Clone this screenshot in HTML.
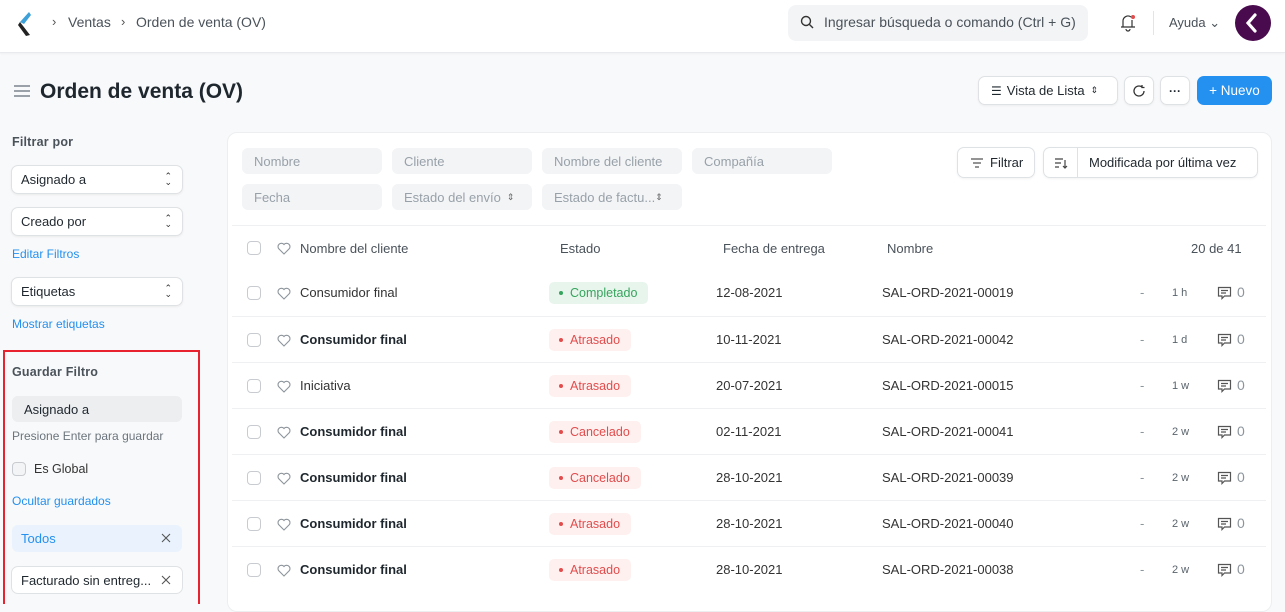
<!DOCTYPE html>
<html><head><meta charset="utf-8">
<style>
*{box-sizing:border-box;margin:0;padding:0}
body{width:1285px;height:604px;overflow:hidden;background:#f8f9fa;font-family:"Liberation Sans",sans-serif;font-size:13px;color:#1f272e;position:relative}
.a{position:absolute}
.nav{left:0;top:0;width:1285px;height:53px;background:#fff;border-bottom:1px solid #e8eaed;box-shadow:0 1px 2px rgba(0,0,0,.04)}
.btn{position:absolute;background:#fff;border:1px solid #dfe2e5;border-radius:7px;box-shadow:0 1px 2px rgba(0,0,0,.05);display:flex;align-items:center;color:#1f272e}
.sel{position:absolute;left:11px;width:172px;height:29px;background:#fff;border:1px solid #dfe2e5;border-radius:7px;box-shadow:0 1px 2px rgba(0,0,0,.06);padding-left:9px;display:flex;align-items:center;font-size:13px}
.car{position:absolute;right:10px;top:7px;font-size:9px;line-height:6px;color:#333;text-align:center}
.link{position:absolute;left:12px;color:#2490ef;font-size:12px}
.card{left:227px;top:132px;width:1045px;height:480px;background:#fff;border:1px solid #eceef0;border-radius:10px}
.fld{position:absolute;width:140px;height:26px;background:#f3f4f6;border-radius:6px;color:#98a1a9;padding-left:12px;display:flex;align-items:center;font-size:13px}
.row{position:absolute;left:232px;width:1034px;height:46px;border-top:1px solid #eef0f2}
.row>*{position:absolute}
.cb{left:15px;width:14px;height:14px;border:1px solid #c8ccd0;border-radius:4px;background:#fff}
.pill{height:22px;border-radius:5px;padding:0 11px 0 21px;display:flex;align-items:center;font-size:12.5px}
.pill:before{content:"";position:absolute;left:10px;top:9px;width:4px;height:4px;border-radius:50%;background:currentColor}
.g{background:#e8f5ec;color:#36a45d}
.r{background:#fff0f0;color:#e24c4c}
.x{position:absolute;right:11px;top:8px}
</style></head><body>
<div class="a nav">
  <svg class="a" style="left:16px;top:11px" width="18" height="26" viewBox="0 0 18 26"><path d="M13 1 L4 11 L8 13 L15 4Z" fill="#3ea0d8"/><path d="M4 11 L14 24 L10 25 L2 14Z" fill="#222"/></svg>
  <div class="a" style="left:52px;top:14px;color:#555">›</div>
  <div class="a" style="left:68px;top:14px;color:#4a525a;font-size:14px">Ventas</div>
  <div class="a" style="left:121px;top:14px;color:#555">›</div>
  <div class="a" style="left:136px;top:14px;color:#4a525a;font-size:14px">Orden de venta (OV)</div>
  <div class="a" style="left:788px;top:5px;width:300px;height:36px;background:#f3f4f6;border-radius:8px"></div>
  <svg class="a" style="left:800px;top:15px" width="14" height="14" viewBox="0 0 14 14"><circle cx="6" cy="6" r="4.5" fill="none" stroke="#333" stroke-width="1.4"/><path d="M9.5 9.5 L13 13" stroke="#333" stroke-width="1.4"/></svg>
  <div class="a" style="left:824px;top:14px;color:#4a525a;font-size:14px">Ingresar búsqueda o comando (Ctrl + G)</div>
  <svg class="a" style="left:1119px;top:13px" width="18" height="20" viewBox="0 0 18 20"><path d="M4 14 V8 a5 5 0 0 1 8 -4 M13 7 V14 M2 14 H16 M7 16 a2 2 0 0 0 4 0" fill="none" stroke="#333" stroke-width="1.2"/><circle cx="14" cy="4" r="2" fill="#e24c4c"/></svg>
  <div class="a" style="left:1153px;top:11px;width:1px;height:24px;background:#e2e4e6"></div>
  <div class="a" style="left:1169px;top:15px;color:#4a525a;font-size:13px">Ayuda ⌄</div>
  <div class="a" style="left:1235px;top:5px;width:36px;height:36px;border-radius:50%;background:#4a0a4e"></div>
  <svg class="a" style="left:1245px;top:13px" width="14" height="20" viewBox="0 0 14 20"><path d="M10 2 L3 10 L10 18" fill="none" stroke="#fff" stroke-width="3.2" stroke-linecap="round"/></svg>
</div>
<svg class="a" style="left:14px;top:84px" width="16" height="14" viewBox="0 0 16 14"><path d="M0 2H16M0 7H16M0 12H16" stroke="#7a848c" stroke-width="1.6"/></svg>
<div class="a" style="left:40px;top:80px;font-size:21px;font-weight:bold;color:#1f272e">Orden de venta (OV)</div>
<div class="btn" style="left:978px;top:76px;width:140px;height:29px;padding-left:12px;font-size:13px"><span style="font-size:12px;margin-right:5px">☰</span>Vista de Lista <span style="margin-left:6px;font-size:9px">⇕</span></div>
<div class="btn" style="left:1124px;top:76px;width:30px;height:29px;justify-content:center"><svg width="14" height="14" viewBox="0 0 14 14"><path d="M12 7 a5 5 0 1 1 -2 -4 M10 1 V3.5 H12.5" fill="none" stroke="#333" stroke-width="1.3"/></svg></div>
<div class="btn" style="left:1160px;top:76px;width:30px;height:29px;justify-content:center;font-weight:bold;font-size:12px">···</div>
<div class="a" style="left:1197px;top:76px;width:75px;height:29px;background:#2490ef;border-radius:7px;color:#fff;font-size:13.5px;display:flex;align-items:center;justify-content:center">+ Nuevo</div>

<div class="a" style="left:12px;top:135px;color:#4a525a;font-size:12.5px;font-weight:bold;letter-spacing:.2px">Filtrar por</div>
<div class="sel" style="top:165px">Asignado a<span class="car">⌃<br>⌄</span></div>
<div class="sel" style="top:207px">Creado por<span class="car">⌃<br>⌄</span></div>
<div class="link" style="top:247px">Editar Filtros</div>
<div class="sel" style="top:277px">Etiquetas<span class="car">⌃<br>⌄</span></div>
<div class="link" style="top:317px">Mostrar etiquetas</div>

<div class="a" style="left:3px;top:350px;width:197px;height:254px;border:2px solid #e8222e;border-bottom:none"></div>
<div class="a" style="left:12px;top:365px;color:#4a525a;font-size:12.5px;font-weight:bold;letter-spacing:.2px">Guardar Filtro</div>
<div class="a" style="left:12px;top:396px;width:170px;height:26px;background:#eceef0;border-radius:6px;padding-left:12px;display:flex;align-items:center;font-size:13px">Asignado a</div>
<div class="a" style="left:12px;top:429px;color:#6c757d;font-size:12px">Presione Enter para guardar</div>
<div class="a" style="left:12px;top:462px;width:14px;height:14px;border:1px solid #c8ccd0;border-radius:4px;background:#f3f4f6"></div>
<div class="a" style="left:34px;top:462px;font-size:12.5px;color:#333">Es Global</div>
<div class="link" style="top:494px">Ocultar guardados</div>
<div class="a" style="left:12px;top:525px;width:170px;height:27px;background:#eaf3fd;border-radius:6px;padding-left:9px;display:flex;align-items:center;color:#2490ef;font-size:13px">Todos<svg class="x" width="10" height="10" viewBox="0 0 10 10"><path d="M1 1L9 9M9 1L1 9" stroke="#555" stroke-width="1.1"/></svg></div>
<div class="a" style="left:11px;top:566px;width:172px;height:28px;background:#fff;border:1px solid #dfe2e5;border-radius:7px;padding-left:9px;display:flex;align-items:center;font-size:13px">Facturado sin entreg...<svg class="x" width="10" height="10" viewBox="0 0 10 10"><path d="M1 1L9 9M9 1L1 9" stroke="#555" stroke-width="1.1"/></svg></div>

<div class="a card"></div>
<div class="fld" style="left:242px;top:148px">Nombre</div>
<div class="fld" style="left:392px;top:148px">Cliente</div>
<div class="fld" style="left:542px;top:148px">Nombre del cliente</div>
<div class="fld" style="left:692px;top:148px">Compañía</div>
<div class="fld" style="left:242px;top:184px">Fecha</div>
<div class="fld" style="left:392px;top:184px">Estado del envío <span style="margin-left:6px;font-size:9px;color:#666">⇕</span></div>
<div class="fld" style="left:542px;top:184px">Estado de factu...<span style="font-size:9px;color:#666">⇕</span></div>
<div class="btn" style="left:957px;top:147px;width:78px;height:31px;padding-left:12px;font-size:13px"><svg width="14" height="10" viewBox="0 0 14 10" style="margin-right:6px"><path d="M1 1H13M3 5H11M5 9H9" stroke="#555" stroke-width="1.3"/></svg>Filtrar</div>
<div class="btn" style="left:1043px;top:147px;width:215px;height:31px;font-size:13px"><span style="width:34px;height:100%;border-right:1px solid #dfe2e5;display:flex;align-items:center;justify-content:center"><svg width="14" height="12" viewBox="0 0 14 12"><path d="M1 2H9M1 6H7M1 10H5M11 3V11M9 9L11 11L13 9" fill="none" stroke="#444" stroke-width="1.2"/></svg></span><span style="padding-left:11px">Modificada por última vez</span></div>

<div class="a" style="left:232px;top:225px;width:1034px;height:1px;background:#eef0f2"></div>
<div class="a" style="left:247px;top:241px;width:14px;height:14px;border:1px solid #c8ccd0;border-radius:4px;background:#fff"></div>
<svg class="a" style="left:277px;top:242px" width="14" height="13" viewBox="0 0 14 13"><path d="M7 12 L1.8 6.8 A3 3 0 0 1 7 2.5 A3 3 0 0 1 12.2 6.8Z" fill="none" stroke="#8d959c" stroke-width="1.1"/></svg>
<div class="a" style="left:300px;top:241px;color:#4a525a">Nombre del cliente</div>
<div class="a" style="left:560px;top:241px;color:#4a525a">Estado</div>
<div class="a" style="left:723px;top:241px;color:#4a525a">Fecha de entrega</div>
<div class="a" style="left:887px;top:241px;color:#4a525a">Nombre</div>
<div class="a" style="left:1191px;top:241px;color:#4a525a">20 de 41</div>

<div id="rows"></div>
<script>
var d=[["Consumidor final",0,"g","Completado","12-08-2021","SAL-ORD-2021-00019","1 h"],
["Consumidor final",1,"r","Atrasado","10-11-2021","SAL-ORD-2021-00042","1 d"],
["Iniciativa",0,"r","Atrasado","20-07-2021","SAL-ORD-2021-00015","1 w"],
["Consumidor final",1,"r","Cancelado","02-11-2021","SAL-ORD-2021-00041","2 w"],
["Consumidor final",1,"r","Cancelado","28-10-2021","SAL-ORD-2021-00039","2 w"],
["Consumidor final",1,"r","Atrasado","28-10-2021","SAL-ORD-2021-00040","2 w"],
["Consumidor final",1,"r","Atrasado","28-10-2021","SAL-ORD-2021-00038","2 w"]];
var h="";
d.forEach(function(r,i){var t=270+i*46;
h+='<div class="row" style="top:'+t+'px;'+(i==0?'border-top:none':'')+'">'+
'<div class="cb" style="top:16px"></div>'+
'<svg style="left:45px;top:17px" width="14" height="13" viewBox="0 0 14 13"><path d="M7 12 L1.8 6.8 A3 3 0 0 1 7 2.5 A3 3 0 0 1 12.2 6.8Z" fill="none" stroke="#8d959c" stroke-width="1.1"/></svg>'+
'<div style="left:68px;top:15px;'+(r[1]?'font-weight:bold;':'color:#333;')+'">'+r[0]+'</div>'+
'<div class="pill '+r[2]+'" style="left:317px;top:12px">'+r[3]+'</div>'+
'<div style="left:484px;top:15px;color:#333">'+r[4]+'</div>'+
'<div style="left:650px;top:15px;color:#333">'+r[5]+'</div>'+
'<div style="left:908px;top:15px;color:#8d959c">-</div>'+
'<div style="left:940px;top:17px;color:#5a646c;font-size:11px">'+r[6]+'</div>'+
'<svg style="left:985px;top:16px" width="15" height="14" viewBox="0 0 15 14"><path d="M1.5 1.5H13.5V10H7.5L5 12.5V10H1.5Z M4 4.5H11M4 7H9" fill="none" stroke="#555" stroke-width="1.2"/></svg>'+
'<div style="left:1005px;top:14px;color:#8d959c;font-size:14px">0</div></div>';});
document.getElementById("rows").innerHTML=h;
</script>
</body></html>
